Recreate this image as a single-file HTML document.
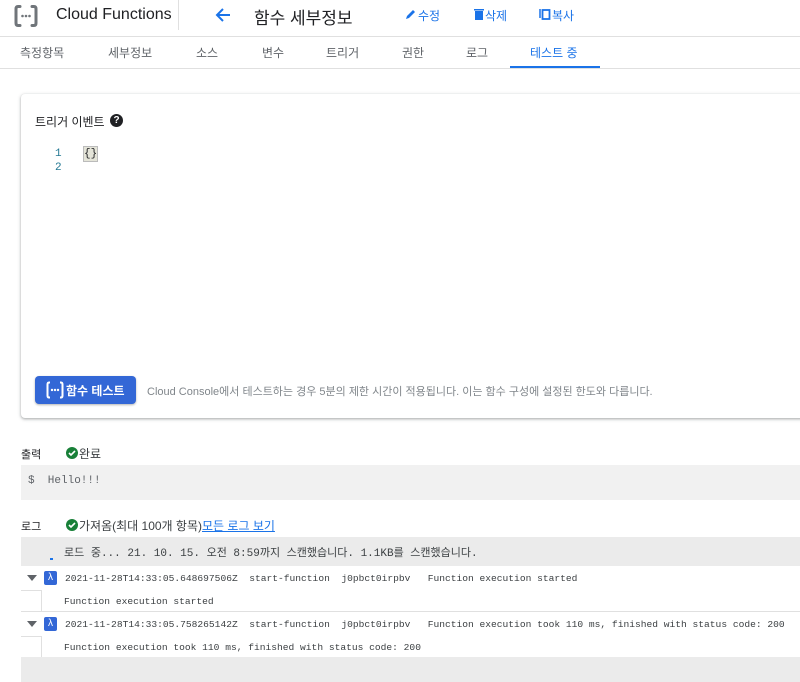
<!DOCTYPE html>
<html><head><meta charset="utf-8"><style>
*{margin:0;padding:0;box-sizing:border-box}
body{width:800px;height:682px;overflow:hidden;background:#fff;font-family:"Liberation Sans","Noto Sans CJK KR",sans-serif;color:#202124;position:relative}
.a{position:absolute;white-space:nowrap}
.mono{font-family:"Liberation Mono","Noto Sans CJK KR",monospace}
.tab{position:absolute;top:44px;font-size:12px;color:#5f6368}
.lg{font-size:9.6px}
</style></head><body>
<!-- header -->
<svg class="a" style="left:12px;top:4px" width="28" height="24" viewBox="0 0 28 24"><path d="M8 2.5 H6 Q4 2.5 4 5 V19 Q4 21.5 6 21.5 H8 M20 2.5 H22 Q24 2.5 24 5 V19 Q24 21.5 22 21.5 H20" fill="none" stroke="#70757a" stroke-width="3" stroke-linecap="round"/><circle cx="10.5" cy="12" r="1.3" fill="#70757a"/><circle cx="14" cy="12" r="1.3" fill="#70757a"/><circle cx="17.5" cy="12" r="1.3" fill="#70757a"/></svg>
<div class="a" style="left:56px;top:6px;font-size:16px;color:#202124">Cloud Functions</div>
<div class="a" style="left:178px;top:0;width:1px;height:30px;background:#e0e0e0"></div>
<svg class="a" style="left:214px;top:6px" width="18" height="18" viewBox="0 0 18 18"><path d="M16 9H3M9 3L3 9l6 6" fill="none" stroke="#1a73e8" stroke-width="2"/></svg>
<div class="a" style="left:254px;top:4px;font-size:17px">함수 세부정보</div>
<svg class="a" style="left:405px;top:8px" width="12" height="12" viewBox="0 0 12 12"><path d="M1 11l1-3 6-6 2 2-6 6z" fill="#1a73e8"/></svg>
<div class="a" style="left:418px;top:7px;font-size:12px;color:#1a73e8">수정</div>
<svg class="a" style="left:474px;top:8px" width="10" height="12" viewBox="0 0 10 12"><path d="M0 1h10v1.5H0zM1 3h8v9H1z" fill="#1a73e8"/></svg>
<div class="a" style="left:485px;top:7px;font-size:12px;color:#1a73e8">삭제</div>
<svg class="a" style="left:539px;top:8px" width="12" height="12" viewBox="0 0 12 12"><path d="M1 1v9" stroke="#1a73e8" stroke-width="1.5"/><rect x="3.5" y="2" width="7" height="9" fill="none" stroke="#1a73e8" stroke-width="1.8"/></svg>
<div class="a" style="left:552px;top:7px;font-size:12px;color:#1a73e8">복사</div>
<div class="a" style="left:0;top:36px;width:800px;height:1px;background:#e0e0e0"></div>
<div class="tab" style="left:20px">측정항목</div>
<div class="tab" style="left:108px">세부정보</div>
<div class="tab" style="left:196px">소스</div>
<div class="tab" style="left:262px">변수</div>
<div class="tab" style="left:326px">트리거</div>
<div class="tab" style="left:402px">권한</div>
<div class="tab" style="left:466px">로그</div>
<div class="tab" style="left:530px;color:#1a73e8">테스트 중</div>
<div class="a" style="left:510px;top:66px;width:90px;height:2px;background:#1a73e8"></div>
<div class="a" style="left:0;top:68px;width:800px;height:1px;background:#e0e0e0"></div>
<!-- card -->
<div class="a" style="left:21px;top:94px;width:790px;height:324px;background:#fff;border-radius:4px;box-shadow:0 1px 2px rgba(60,64,67,.3),0 1px 3px 1px rgba(60,64,67,.15)"></div>
<div class="a" style="left:35px;top:113px;font-size:12px">트리거 이벤트</div>
<div class="a" style="left:110px;top:114px;width:13px;height:13px;border-radius:50%;background:#202124;color:#fff;font-size:10px;font-weight:bold;text-align:center;line-height:13px">?</div>
<div class="a mono" style="left:55px;top:147px;font-size:11px;color:#237893;line-height:14px">1<br>2</div>
<div class="a mono" style="left:84px;top:147px;font-size:11px;line-height:14px;background:#e4e4d8;outline:1px solid #bbb">{}</div>
<div class="a" style="left:35px;top:376px;width:101px;height:28px;background:#3367d6;border-radius:4px;box-shadow:0 1px 2px rgba(0,0,0,.3)"></div>
<svg class="a" style="left:45px;top:381px" width="20" height="18" viewBox="0 0 20 18"><path d="M5 1.5H4Q2.5 1.5 2.5 3.5V14.5Q2.5 16.5 4 16.5H5M15 1.5H16Q17.5 1.5 17.5 3.5V14.5Q17.5 16.5 16 16.5H15" fill="none" stroke="#fff" stroke-width="2"/><circle cx="7" cy="9" r="1.2" fill="#fff"/><circle cx="10" cy="9" r="1.2" fill="#fff"/><circle cx="13" cy="9" r="1.2" fill="#fff"/></svg>
<div class="a" style="left:66px;top:382px;font-size:12px;color:#fff;font-weight:bold">함수 테스트</div>
<div class="a" style="left:147px;top:383px;font-size:11px;color:#80868b">Cloud Console에서 테스트하는 경우 5분의 제한 시간이 적용됩니다. 이는 함수 구성에 설정된 한도와 다릅니다.</div>
<!-- output -->
<div class="a" style="left:21px;top:446px;font-size:11px">출력</div>
<svg class="a" style="left:66px;top:447px" width="12" height="12" viewBox="0 0 12 12"><circle cx="6" cy="6" r="6" fill="#188038"/><path d="M3 6l2 2 4-4" fill="none" stroke="#fff" stroke-width="1.6"/></svg>
<div class="a" style="left:79px;top:445px;font-size:12px;color:#3c4043">완료</div>
<div class="a" style="left:21px;top:465px;width:779px;height:35px;background:#f1f1f1"></div>
<div class="a mono" style="left:28px;top:475px;font-size:11px;color:#5f6368">$ &nbsp;Hello!!!</div>
<div class="a" style="left:21px;top:518px;font-size:11px">로그</div>
<svg class="a" style="left:66px;top:519px" width="12" height="12" viewBox="0 0 12 12"><circle cx="6" cy="6" r="6" fill="#188038"/><path d="M3 6l2 2 4-4" fill="none" stroke="#fff" stroke-width="1.6"/></svg>
<div class="a" style="left:79px;top:517px;font-size:12px;color:#3c4043">가져옴(최대 100개 항목)<span style="color:#1a73e8;text-decoration:underline">모든 로그 보기</span></div>
<div class="a" style="left:21px;top:537px;width:779px;height:29px;background:#ebebeb"></div>
<div class="a" style="left:50px;top:558px;width:3px;height:2px;background:#1a73e8"></div>
<div class="a mono" style="left:64px;top:544px;font-size:11px;color:#3c4043">로드 중... 21. 10. 15. 오전 8:59까지 스캔했습니다. 1.1KB를 스캔했습니다.</div>
<!-- rows -->
<div class="a" style="left:27px;top:575px;width:0;height:0;border-left:5px solid transparent;border-right:5px solid transparent;border-top:6px solid #5f6368"></div>
<div class="a" style="left:44px;top:571px;width:13px;height:14px;background:#3367d6;border-radius:2px;color:#fff;font-size:10px;text-align:center;line-height:14px">λ</div>
<div class="a mono lg" style="left:65px;top:573px;color:#3c4043">2021-11-28T14:33:05.648697506Z &nbsp;start-function &nbsp;j0pbct0irpbv &nbsp;&nbsp;Function execution started</div>
<div class="a" style="left:21px;top:590px;width:21px;height:22px;border-right:1px solid #e0e0e0;border-top:1px solid #e0e0e0"></div>
<div class="a mono lg" style="left:64px;top:596px;color:#3c4043">Function execution started</div>
<div class="a" style="left:21px;top:611px;width:779px;height:1px;background:#e0e0e0"></div>
<div class="a" style="left:27px;top:621px;width:0;height:0;border-left:5px solid transparent;border-right:5px solid transparent;border-top:6px solid #5f6368"></div>
<div class="a" style="left:44px;top:617px;width:13px;height:14px;background:#3367d6;border-radius:2px;color:#fff;font-size:10px;text-align:center;line-height:14px">λ</div>
<div class="a mono lg" style="left:65px;top:619px;color:#3c4043">2021-11-28T14:33:05.758265142Z &nbsp;start-function &nbsp;j0pbct0irpbv &nbsp;&nbsp;Function execution took 110 ms, finished with status code: 200</div>
<div class="a" style="left:21px;top:636px;width:21px;height:22px;border-right:1px solid #e0e0e0;border-top:1px solid #e0e0e0"></div>
<div class="a mono lg" style="left:64px;top:642px;color:#3c4043">Function execution took 110 ms, finished with status code: 200</div>
<div class="a" style="left:21px;top:657px;width:779px;height:25px;background:#ebebeb"></div>
</body></html>
